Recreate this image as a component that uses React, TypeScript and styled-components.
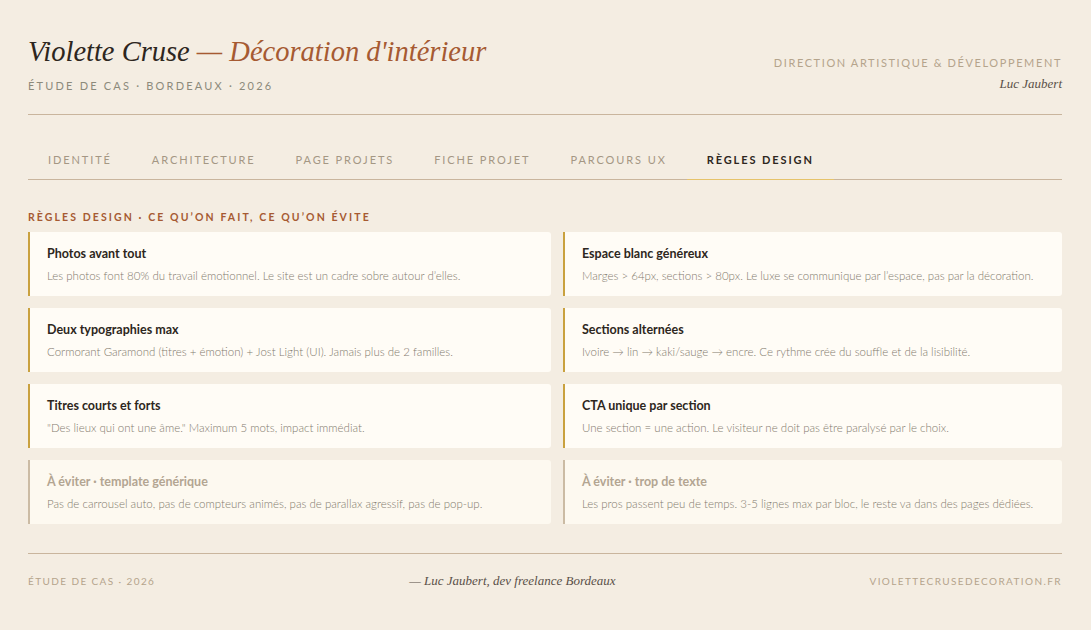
import React from 'react';
import styled, {createGlobalStyle} from 'styled-components';

const GlobalStyle = createGlobalStyle`
  html, body {
    margin: 0;
    padding: 0;
    background-color: #f4ede2;
  }
  body {
    font-family: Lato, "Noto Sans", sans-serif;
    color: #2d2620;
  }
`

const Page = styled.div`
  box-sizing: border-box;
  width: 1091px;
  min-height: 630px;
  padding: 34px 29px 0 28px;
  background-color: #f4ede2;
`

const Header = styled.header`
  display: flex;
  justify-content: space-between;
  align-items: flex-start;
  padding-bottom: 22px;
  border-bottom: 1px solid #c9b59d;
`

const Title = styled.h1`
  margin: 0;
  font-family: "Liberation Serif", serif;
  font-style: italic;
  font-weight: 400;
  font-size: 28.5px;
  line-height: 36px;
  color: #2d2620;
  em {
    color: #a65a32;
  }
`

const Kicker = styled.div`
  margin-top: 9px;
  font-size: 11px;
  letter-spacing: 2.2px;
  color: #8c8a7b;
  text-transform: uppercase;
`

const HeaderRight = styled.div`
  text-align: right;
  padding-top: 22px;
`

const Credit = styled.div`
  font-size: 11px;
  letter-spacing: 1.6px;
  color: #b5a48c;
  text-transform: uppercase;
`

const Signature = styled.div`
  margin-top: 7px;
  font-family: "Liberation Serif", serif;
  font-style: italic;
  font-size: 13px;
  color: #5a5048;
`

const Nav = styled.nav`
  display: flex;
  margin-top: 38px;
  border-bottom: 1px solid #c9b59d;
`

const Tab = styled.div<{ $active?: boolean }>`
  padding: 0 20px 13px;
  font-size: 11px;
  letter-spacing: 1.9px;
  text-transform: uppercase;
  font-weight: ${p => (p.$active ? 700 : 400)};
  color: ${p => (p.$active ? '#2d2620' : '#a49784')};
  margin-bottom: -1px;
  border-bottom: 1px solid ${p => (p.$active ? '#e6c36a' : 'transparent')};
`

const SectionLabel = styled.h2`
  margin: 31px 0 9px;
  font-size: 10.5px;
  font-weight: 700;
  letter-spacing: 2.1px;
  text-transform: uppercase;
  color: #a65a32;
`

const Grid = styled.div`
  display: grid;
  grid-template-columns: 523px 1fr;
  gap: 12px;
`

const Card = styled.div<{ $avoid?: boolean }>`
  box-sizing: border-box;
  height: 64px;
  padding: 14px 17px 0;
  background-color: ${p => (p.$avoid ? '#fdf9f0' : '#fffcf6')};
  border-left: 2px solid ${p => (p.$avoid ? '#cbbba4' : '#c9a13f')};
  border-radius: 0 3px 3px 0;
`

const CardTitle = styled.div<{ $avoid?: boolean }>`
  font-size: 12.5px;
  font-weight: 700;
  line-height: 16px;
  color: ${p => (p.$avoid ? '#b3a592' : '#2d2620')};
`

const CardText = styled.div`
  margin-top: 6px;
  font-size: 11.5px;
  font-weight: 300;
  line-height: 16px;
  color: #837b6e;
`

const Footer = styled.footer`
  display: flex;
  justify-content: space-between;
  align-items: center;
  margin-top: 29px;
  padding-top: 19px;
  border-top: 1px solid #c9b59d;
`

const FooterNote = styled.div`
  font-size: 10px;
  letter-spacing: 1.4px;
  text-transform: uppercase;
  color: #b5a48c;
`

const FooterQuote = styled.div`
  font-family: "Liberation Serif", serif;
  font-style: italic;
  font-size: 13px;
  color: #5a5048;
`

const tabs = ['Identité', 'Architecture', 'Page projets', 'Fiche projet', 'Parcours UX', 'Règles design']

const rules = [
    {title: 'Photos avant tout', text: 'Les photos font 80% du travail émotionnel. Le site est un cadre sobre autour d’elles.'},
    {title: 'Espace blanc généreux', text: 'Marges > 64px, sections > 80px. Le luxe se communique par l’espace, pas par la décoration.'},
    {title: 'Deux typographies max', text: 'Cormorant Garamond (titres + émotion) + Jost Light (UI). Jamais plus de 2 familles.'},
    {title: 'Sections alternées', text: 'Ivoire → lin → kaki/sauge → encre. Ce rythme crée du souffle et de la lisibilité.'},
    {title: 'Titres courts et forts', text: '"Des lieux qui ont une âme." Maximum 5 mots, impact immédiat.'},
    {title: 'CTA unique par section', text: 'Une section = une action. Le visiteur ne doit pas être paralysé par le choix.'},
    {title: 'À éviter · template générique', text: 'Pas de carrousel auto, pas de compteurs animés, pas de parallax agressif, pas de pop-up.', avoid: true},
    {title: 'À éviter · trop de texte', text: 'Les pros passent peu de temps. 3-5 lignes max par bloc, le reste va dans des pages dédiées.', avoid: true},
]

const App: React.FC = () => {
    return (
        <Page>
            <GlobalStyle/>
            <Header>
                <div>
                    <Title>Violette Cruse <em>— Décoration d'intérieur</em></Title>
                    <Kicker>Étude de cas · Bordeaux · 2026</Kicker>
                </div>
                <HeaderRight>
                    <Credit>Direction artistique &amp; développement</Credit>
                    <Signature>Luc Jaubert</Signature>
                </HeaderRight>
            </Header>
            <Nav>
                {tabs.map((t, i) => (
                    <Tab key={t} $active={i === tabs.length - 1}>{t}</Tab>
                ))}
            </Nav>
            <SectionLabel>Règles design · ce qu’on fait, ce qu’on évite</SectionLabel>
            <Grid>
                {rules.map(r => (
                    <Card key={r.title} $avoid={r.avoid}>
                        <CardTitle $avoid={r.avoid}>{r.title}</CardTitle>
                        <CardText>{r.text}</CardText>
                    </Card>
                ))}
            </Grid>
            <Footer>
                <FooterNote>Étude de cas · 2026</FooterNote>
                <FooterQuote>— Luc Jaubert, dev freelance Bordeaux</FooterQuote>
                <FooterNote>violettecrusedecoration.fr</FooterNote>
            </Footer>
        </Page>
    );
}

export default App
